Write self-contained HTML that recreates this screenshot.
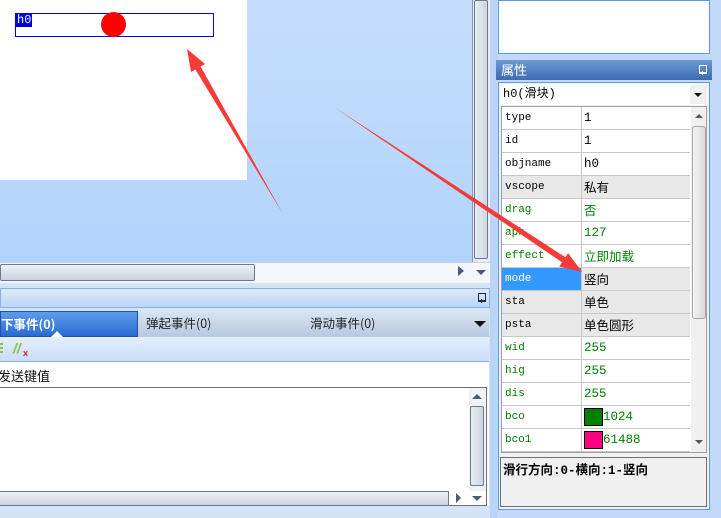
<!DOCTYPE html>
<html><head><meta charset="utf-8">
<style>
*{margin:0;padding:0;box-sizing:border-box}
body{width:721px;height:518px;overflow:hidden;background:#d4e4f7;font-family:"Liberation Sans","Noto Sans CJK SC",sans-serif;font-size:12px;position:relative}
.a{position:absolute}
.mono{font-family:"Liberation Mono","Noto Sans CJK SC",monospace;font-size:11px}
.cjk{font-family:"Noto Sans CJK SC","WenQuanYi Zen Hei",sans-serif}
.row{position:absolute;left:0;width:188px;height:23px;border-bottom:1px solid #c8c8c8}
.row .k{position:absolute;left:0;top:0;width:80px;height:22px;border-right:1px solid #c8c8c8;padding-left:3px;line-height:22px}
.row .v{position:absolute;left:80px;top:0;width:108px;height:22px;padding-left:2px;font-size:12.5px;line-height:22px;white-space:nowrap}
.g{color:#008000}
.pin{position:absolute;width:8px;height:10px}
.pin:before{content:"";position:absolute;left:1px;top:0;width:6px;height:6px;border:1.5px solid currentColor;border-bottom-width:2px}
.pin:after{content:"";position:absolute;left:3.5px;top:6px;width:1.5px;height:4px;background:currentColor}
</style></head><body>
<!-- canvas -->
<div class="a" style="left:0;top:0;width:472px;height:262px;background:linear-gradient(#c6defd,#b2d3fb)"></div>
<div class="a" style="left:0;top:0;width:247px;height:180px;background:#fff"></div>
<div class="a" style="left:15px;top:13px;width:199px;height:24px;border:1px solid #0000e0"></div>
<div class="a mono" style="left:16px;top:14px;height:13px;background:#0000e0;color:#fff;font-size:12px;line-height:13px;padding:0 1px">h0</div>
<div class="a" style="left:101px;top:12px;width:25px;height:25px;border-radius:50%;background:#f00"></div>
<!-- vertical scrollbar -->
<div class="a" style="left:472px;top:0;width:18px;height:262px;background:#e9edf3;border-left:1px solid #8796b0"></div>
<div class="a" style="left:474px;top:0;width:14px;height:259px;background:linear-gradient(90deg,#e8ecf2,#cdd5e0);border:1px solid #6a7a96;border-radius:2px"></div>
<!-- horizontal scrollbar -->
<div class="a" style="left:0;top:262px;width:490px;height:21px;background:#f4f6f9;border-top:1px solid #c8d2e0"></div>
<div class="a" style="left:0;top:264px;width:255px;height:17px;background:linear-gradient(#eef1f6,#c9d2de);border:1px solid #6a7a96;border-radius:2px"></div>
<div class="a" style="left:458px;top:266px;width:0;height:0;border-left:6px solid #4a5a78;border-top:5px solid transparent;border-bottom:5px solid transparent"></div>
<div class="a" style="left:476px;top:270px;width:0;height:0;border-top:5px solid #4a5a78;border-left:5px solid transparent;border-right:5px solid transparent"></div>
<div class="a" style="left:490px;top:0;width:7px;height:518px;background:#b8d4f6"></div>
<!-- bottom panel -->
<div class="a" style="left:0;top:288px;width:490px;height:20px;background:linear-gradient(#dceafd,#bcd6f6);border:1px solid #8ab0e0"></div>
<div class="pin" style="left:477px;top:293px;color:#1a2a44"></div>
<div class="a" style="left:0;top:311px;width:489px;height:26px;background:linear-gradient(#d8e4f2,#b8c8de)"></div>
<div class="a cjk" style="left:0;top:311px;width:138px;height:26px;background:linear-gradient(#5d9cec,#2a6ad0);border:1px solid #1e52b0;color:#fff;font-weight:bold;line-height:24px;overflow:hidden;white-space:nowrap;font-size:12.5px">下事件(0)</div>
<div class="a" style="left:51px;top:331px;width:0;height:0;border-bottom:6px solid #fff;border-left:6px solid transparent;border-right:6px solid transparent"></div>
<div class="a cjk" style="left:146px;top:311px;font-size:12.5px;line-height:24px;color:#222">弹起事件(0)</div>
<div class="a cjk" style="left:310px;top:311px;font-size:12.5px;line-height:24px;color:#222">滑动事件(0)</div>
<div class="a" style="left:474px;top:321px;border-top:6px solid #111;border-left:6px solid transparent;border-right:6px solid transparent"></div>
<div class="a" style="left:0;top:337px;width:489px;height:25px;background:linear-gradient(#e4effd,#c8ddf8);border-bottom:1px solid #8ab0e0"></div>
<div class="a" style="left:0;top:343px;width:3px;height:11px;background:repeating-linear-gradient(#8cc040 0 2px,transparent 2px 4px)"></div>
<div class="a" style="left:13px;top:340px;font-size:14px;color:#8cc040;font-weight:bold;font-style:italic">//</div>
<div class="a" style="left:23px;top:348px;font-size:9px;color:#e02020;font-weight:bold">x</div>
<div class="a" style="left:0;top:362px;width:489px;height:143px;background:#fff"></div>
<div class="a cjk" style="left:-2px;top:366px;font-size:13px;color:#111">发送键值</div>
<div class="a" style="left:0;top:387px;width:487px;height:119px;border:1px solid #707070;border-left:none"></div>
<div class="a" style="left:469px;top:388px;width:17px;height:103px;background:#f0f2f5"></div>
<div class="a" style="left:472px;top:394px;border-bottom:5px solid #4a5a78;border-left:5px solid transparent;border-right:5px solid transparent"></div>
<div class="a" style="left:470px;top:406px;width:14px;height:80px;background:linear-gradient(90deg,#e8ecf2,#cdd5e0);border:1px solid #6a7a96;border-radius:2px"></div>
<div class="a" style="left:0;top:491px;width:449px;height:15px;background:linear-gradient(#eef1f6,#c9d2de);border:1px solid #6a7a96;border-left:none"></div>
<div class="a" style="left:456px;top:493px;border-left:5px solid #4a5a78;border-top:5px solid transparent;border-bottom:5px solid transparent"></div>
<div class="a" style="left:472px;top:496px;border-top:5px solid #4a5a78;border-left:5px solid transparent;border-right:5px solid transparent"></div>
<!-- right panel -->
<div class="a" style="left:497px;top:0;width:224px;height:518px;background:#c2daf8"></div>
<div class="a" style="left:498px;top:0;width:212px;height:54px;background:#fff;border:1px solid #5a9ae8"></div>
<div class="a cjk" style="left:496px;top:60px;width:216px;height:20px;background:linear-gradient(#6d9ad4,#3c6cb0);color:#fff;font-size:13px;padding:0 0 0 5px;line-height:20px">属性</div>
<div class="pin" style="left:698px;top:65px;color:#fff"></div>
<div class="a" style="left:498px;top:82px;width:212px;height:428px;border:1px solid #5a9ae8;background:#f0f0f0"></div>
<div class="a mono" style="left:500px;top:84px;width:208px;height:21px;background:#fff;padding-left:3px;line-height:21px;font-size:12px">h0(滑块)</div>
<div class="a" style="left:690px;top:85px;width:17px;height:19px;background:#f0f0f0"></div>
<div class="a" style="left:694px;top:93px;border-top:4px solid #111;border-left:4px solid transparent;border-right:4px solid transparent"></div>
<div class="a" style="left:501px;top:106px;width:206px;height:347px;background:#fff;border:1px solid #a0a0a0;overflow:hidden">
<div class="a" style="left:189px;top:0;width:16px;height:346px;background:#f0f0f0"></div>
<div class="a" style="left:193px;top:7px;border-bottom:4px solid #555;border-left:4px solid transparent;border-right:4px solid transparent"></div>
<div class="a" style="left:190px;top:19px;width:14px;height:193px;background:linear-gradient(90deg,#f4f4f4,#d8d8d8);border:1px solid #a8a8a8;border-radius:3px"></div>
<div class="a" style="left:193px;top:333px;border-top:4px solid #555;border-left:4px solid transparent;border-right:4px solid transparent"></div>
<div class="row mono" style="top:0"><div class="k">type</div><div class="v">1</div></div>
<div class="row mono" style="top:23px"><div class="k">id</div><div class="v">1</div></div>
<div class="row mono" style="top:46px"><div class="k">objname</div><div class="v">h0</div></div>
<div class="row mono" style="top:69px;background:#e8e8e8"><div class="k">vscope</div><div class="v cjk">私有</div></div>
<div class="row mono g" style="top:92px"><div class="k">drag</div><div class="v cjk">否</div></div>
<div class="row mono g" style="top:115px"><div class="k">aph</div><div class="v">127</div></div>
<div class="row mono g" style="top:138px"><div class="k">effect</div><div class="v cjk">立即加载</div></div>
<div class="row mono" style="top:161px;background:#e8e8e8"><div class="k" style="background:#3399ff;color:#fff">mode</div><div class="v cjk">竖向</div></div>
<div class="row mono" style="top:184px;background:#e8e8e8"><div class="k">sta</div><div class="v cjk">单色</div></div>
<div class="row mono" style="top:207px;background:#e8e8e8"><div class="k">psta</div><div class="v cjk">单色圆形</div></div>
<div class="row mono g" style="top:230px"><div class="k">wid</div><div class="v">255</div></div>
<div class="row mono g" style="top:253px"><div class="k">hig</div><div class="v">255</div></div>
<div class="row mono g" style="top:276px"><div class="k">dis</div><div class="v">255</div></div>
<div class="row mono g" style="top:299px"><div class="k">bco</div><div class="v"><span style="display:inline-block;width:19px;height:18px;background:#008000;border:1px solid #000;vertical-align:middle"></span>1024</div></div>
<div class="row mono g" style="top:322px"><div class="k">bco1</div><div class="v"><span style="display:inline-block;width:19px;height:18px;background:#ff0080;border:1px solid #000;vertical-align:middle"></span>61488</div></div>
</div>
<div class="a mono" style="left:500px;top:457px;width:207px;height:50px;border:1px solid #707070;background:#f0f0f0;font-weight:bold;font-size:12.5px;padding:1px 0 0 2px;color:#000">滑行方向:0-横向:1-竖向</div>
<!-- arrows -->
<svg class="a" style="left:0;top:0" width="721" height="518">
<polygon fill="#f53a3a" points="187,49 205,64 200.6,66.5 283,214 195.4,69.5 191,72"/>
<polygon fill="#f53a3a" points="582,272 559.3,266.5 562,262.3 334,107 565.4,257.3 568.1,253.1"/>
</svg>
</body></html>
